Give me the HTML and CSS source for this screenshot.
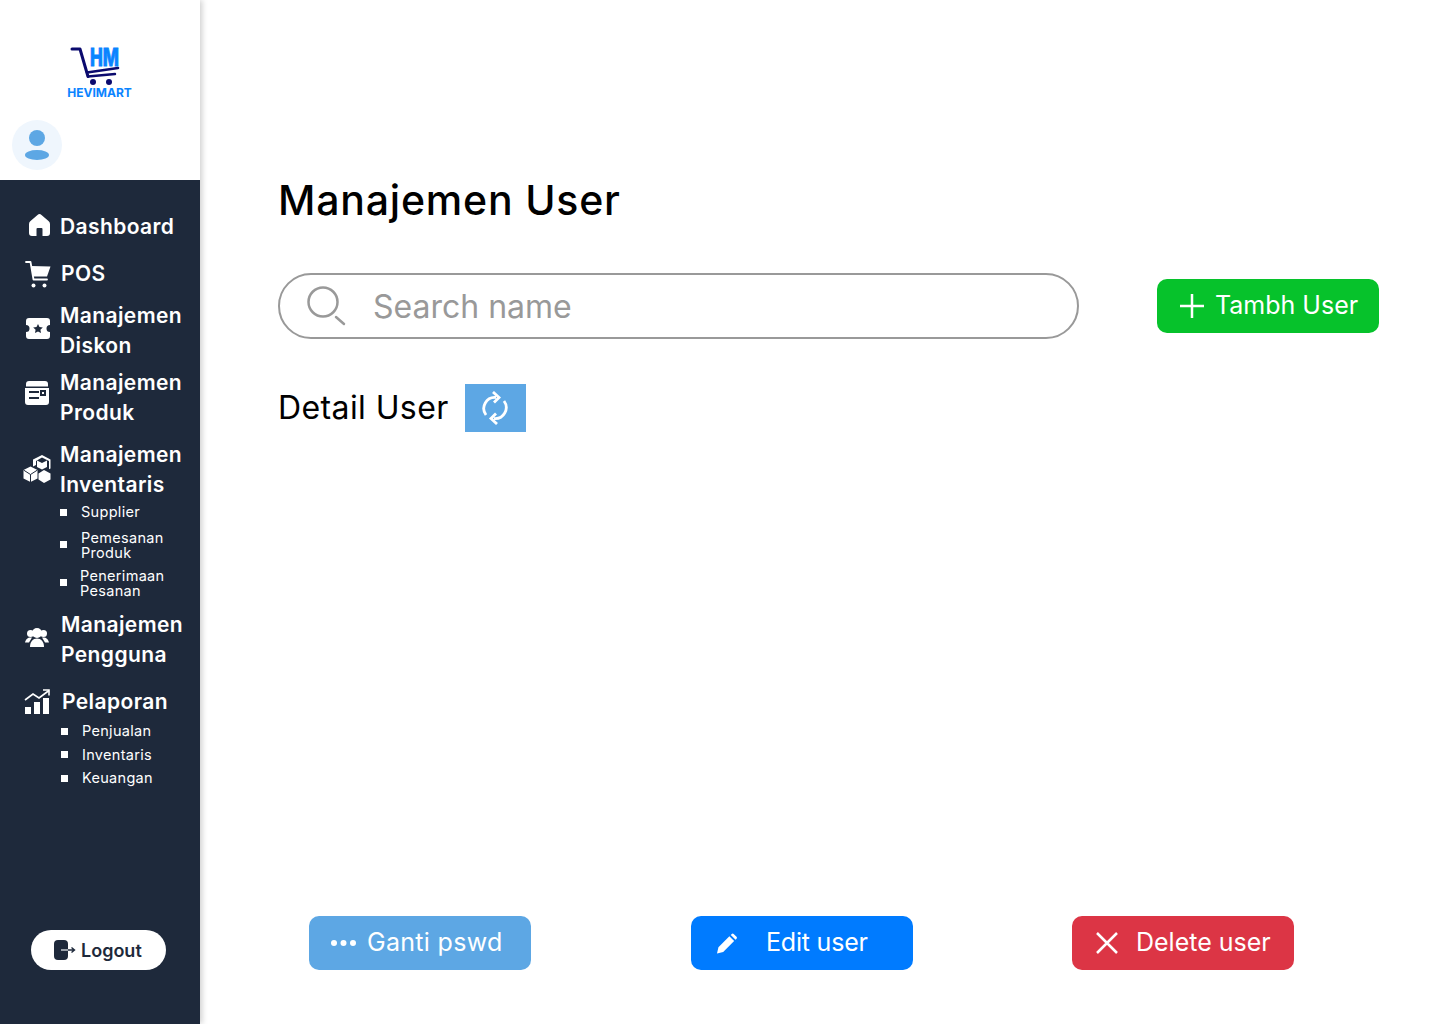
FILE: index.html
```html
<!DOCTYPE html>
<html lang="id">
<head>
    <meta charset="UTF-8">
    <meta name="viewport" content="width=device-width, initial-scale=1.0">
    <title>Manajemen User</title>

    <link rel="stylesheet" href="styles.css">
</head>
<body>

<div class="layout">

    <aside class="sidebar">
        <div class="sidebar-top">
            <div class="logo">
                <svg class="logo-mark" width="70" height="45" viewBox="0 -6 70 45">
                    <text x="20" y="18.500" class="logo-hm" textLength="29" lengthAdjust="spacingAndGlyphs">HM</text>
                    <path d="M2 2h8l8 27.500" fill="none" stroke="#0b0a6e" stroke-width="3" stroke-linecap="round" stroke-linejoin="round"/>
                    <path d="M17 25.500L48 21" fill="none" stroke="#0b0a6e" stroke-width="2.600" stroke-linecap="round"/>
                    <path d="M18 29.500L45 27" fill="none" stroke="#0b0a6e" stroke-width="2.400" stroke-linecap="round"/>
                    <circle cx="23" cy="35" r="3" fill="#0b0a6e"/>
                    <circle cx="39" cy="35" r="3" fill="#0b0a6e"/>
                </svg>
                <span class="logo-name">HEVIMART</span>
            </div>
            <div class="avatar">
                <svg width="26" height="32" viewBox="0 0 26 32">
                    <circle cx="13" cy="9" r="8" fill="#5da7e4"/>
                    <ellipse cx="13" cy="26" rx="12" ry="5" fill="#5da7e4"/>
                </svg>
            </div>
        </div>

        <nav class="menu">
            <a class="menu-item first">
                <span class="menu-icon">
                    <svg width="21" height="22" viewBox="0 0 21 22"><path d="M8.500 1a3 3 0 0 1 4 0l7 6a4 4 0 0 1 1.500 3v9a3 3 0 0 1-3 3h-4.500v-7a1 1 0 0 0-1-1h-4a1 1 0 0 0-1 1v7H3a3 3 0 0 1-3-3v-9a4 4 0 0 1 1.500-3z" fill="#fff"/></svg>
                </span>
                Dashboard
            </a>
            <a class="menu-item pos shift-1">
                <span class="menu-icon">
                    <svg width="26" height="27" viewBox="0 0 26 27"><path d="M1 1h4.500l3 17.500H22" fill="none" stroke="#fff" stroke-width="1.800" stroke-linecap="round" stroke-linejoin="round"/><path d="M6 5l19.500.500-3.500 10H8z" fill="#fff"/><circle cx="8.500" cy="24.500" r="2" fill="#fff"/><circle cx="19.500" cy="24.500" r="2" fill="#fff"/></svg>
                </span>
                POS
            </a>
            <a class="menu-item diskon">
                <span class="menu-icon">
                    <svg width="24" height="21" viewBox="0 0 24 21"><path fill-rule="evenodd" d="M3 0h18a3 3 0 0 1 3 3v4a3.500 3.500 0 0 0 0 7v4a3 3 0 0 1-3 3H3a3 3 0 0 1-3-3v-4a3.500 3.500 0 0 0 0-7V3a3 3 0 0 1 3-3zM12 6l1.500 3 3.300.400-2.400 2.300.600 3.300L12 13.400 9 15l.600-3.300-2.400-2.300 3.300-.400z" fill="#fff"/></svg>
                </span>
                <span>Manajemen<br>Diskon</span>
            </a>
            <a class="menu-item produk">
                <span class="menu-icon">
                    <svg width="24" height="24" viewBox="0 0 24 24"><path d="M4 0h16a3 3 0 0 1 3 3v2.500H1V3a3 3 0 0 1 3-3z" fill="#fff"/><path fill-rule="evenodd" d="M0 7h24v14a3 3 0 0 1-3 3H3a3 3 0 0 1-3-3zM4 10v2h10v-2zM15 9v6h6V9zM17 11h2v2h-2zM4 16v2h10v-2z" fill="#fff"/></svg>
                </span>
                <span>Manajemen<br>Produk</span>
            </a>
            <a class="menu-item inventaris">
                <span class="menu-icon">
                    <svg width="28" height="28" viewBox="0 0 28 28"><path d="M19 0l8.500 4.500v9l-1.500.800V6l-7-3.500L13 6v4l-3 1.500V4.500z" fill="#fff"/><path d="M14 5.500l5 2.500 5-2.500v6.500l-5 2.500-5-2.500z" fill="#fff"/><path d="M7.500 11.500L14.500 15v8.500L7.500 27 .500 23.500V15z" fill="#fff"/><path d="M7.500 19.500L.500 15M7.500 19.500L14.500 15M7.500 19.500V27" fill="none" stroke="#1e293b"/><path d="M21 15l6.500 3.500v6L21 28l-5.500-3.500v-6z" fill="#fff"/></svg>
                </span>
                <span>Manajemen<br>Inventaris</span>
            </a>

            <ul class="submenu submenu-inventaris">
                <li class="sub-single">Supplier</li>
                <li class="sub-double">Pemesanan<br>Produk</li>
                <li class="sub-double sub-penerimaan">Penerimaan<br>Pesanan</li>
            </ul>

            <a class="menu-item pengguna shift-1">
                <span class="menu-icon">
                    <svg width="24" height="21" viewBox="0 0 24 21"><circle cx="12" cy="6" r="5" fill="#fff"/><circle cx="5.500" cy="6.500" r="3.500" fill="#fff"/><circle cx="18.500" cy="6.500" r="3.500" fill="#fff"/><path d="M0 15.500C1 11 4 10 7 10.500L4 15.500zM24 15.500C23 11 20 10 17 10.500L20 15.500z" fill="#fff"/><path d="M5 20c0-5.500 3-8.500 7-8.500s7 3 7 8.500z" fill="#fff"/></svg>
                </span>
                <span>Manajemen<br>Pengguna</span>
            </a>
            <a class="menu-item pelaporan shift-2">
                <span class="menu-icon">
                    <svg width="26" height="25" viewBox="0 0 26 25"><path d="M1 11l8-6 6 4L25 1.500" fill="none" stroke="#fff" stroke-width="1.600"/><path d="M19 1h6v5.500" fill="none" stroke="#fff" stroke-width="1.600"/><rect x="1" y="18" width="6" height="7" fill="#fff"/><rect x="10" y="13" width="6" height="12" fill="#fff"/><rect x="19" y="9" width="6" height="16" fill="#fff"/></svg>
                </span>
                Pelaporan
            </a>

            <ul class="submenu submenu-pelaporan">
                <li>Penjualan</li>
                <li>Inventaris</li>
                <li>Keuangan</li>
            </ul>
        </nav>

        <button class="logout">
            <svg width="22" height="20" viewBox="0 0 22 20"><rect x="0" y="0" width="14" height="20" rx="4" fill="#1e293b"/><path d="M7 10h13M17.500 7.500L20.500 10l-3 2.500" fill="none" stroke="#1e293b" stroke-width="1.400"/><path d="M7 10h7" stroke="#d5d9df" stroke-width="1.400"/></svg>
            Logout
        </button>
    </aside>

    <main class="content">
        <h1>Manajemen User</h1>

        <div class="toolbar">
            <label class="search">
                <svg width="40" height="40" viewBox="0 0 40 40"><circle cx="16" cy="16" r="14.500" fill="none" stroke="#999" stroke-width="2.500"/><path d="M29 31l8 7" stroke="#999" stroke-width="2.500" stroke-linecap="round"/></svg>
                <input type="text" placeholder="Search name">
            </label>
            <button class="btn btn-green">
                <svg width="24" height="24" viewBox="0 0 24 24"><path d="M12 0v24M0 12h24" stroke="#fff" stroke-width="2.500"/></svg>
                <span class="btn-text">Tambh User</span>
            </button>
        </div>

        <div class="detail">
            <h2>Detail User</h2>
            <button class="refresh">
                <svg width="26" height="34" viewBox="0 0 26 34">
                    <path d="M4 24A11 11 0 0 1 14 6.500" fill="none" stroke="#fff" stroke-width="2.800"/>
                    <path d="M11 1l6 5.500-5 5" fill="none" stroke="#fff" stroke-width="2.800"/>
                    <path d="M22 10A11 11 0 0 1 12 27.500" fill="none" stroke="#fff" stroke-width="2.800"/>
                    <path d="M15 33l-6-5.500 5-5" fill="none" stroke="#fff" stroke-width="2.800"/>
                </svg>
            </button>
        </div>

        <div class="actions">
            <button class="btn btn-light">
                <svg width="27" height="8" viewBox="0 0 27 8"><circle cx="4" cy="4" r="3" fill="#fff"/><circle cx="13.500" cy="4" r="3" fill="#fff"/><circle cx="23" cy="4" r="3" fill="#fff"/></svg>
                <span class="btn-text">Ganti pswd</span>
            </button>
            <button class="btn btn-blue">
                <svg width="20" height="21" viewBox="0 0 21 21"><path d="M0 21l1.500-6.500L13 3l5 5L6.500 19.500zM14.500 1.500l1-1a1.500 1.500 0 0 1 2 0l3 3a1.500 1.500 0 0 1 0 2l-1 1z" fill="#fff"/></svg>
                <span class="btn-text">Edit user</span>
            </button>
            <button class="btn btn-red">
                <svg width="22" height="22" viewBox="0 0 22 22"><path d="M1 1l20 20M21 1L1 21" stroke="#fff" stroke-width="2.500"/></svg>
                <span class="btn-text">Delete user</span>
            </button>
        </div>
    </main>

</div>

</body>
</html>
```

FILE: styles.css
```css
* {
    box-sizing: border-box;
}

body {
    margin: 0;
    font-family: Inter, "Liberation Sans", sans-serif;
    background-color: #ffffff;
}

.layout {
    display: flex;
    height: 1024px;
}

/* Sidebar */
.sidebar {
    width: 200px;
    flex-shrink: 0;
    display: flex;
    flex-direction: column;
    background-color: #1e293b;
    box-shadow: 2px 0 6px rgba(0, 0, 0, 0.2);
    color: #ffffff;
}

.sidebar-top {
    height: 180px;
    background-color: #ffffff;
    padding: 41px 0 0 12px;
}

.logo {
    width: 175px;
    display: flex;
    flex-direction: column;
    align-items: center;
}

.logo-mark {
    margin-right: -11px;
}

.logo-hm {
    font-family: Inter, sans-serif;
    font-size: 24px;
    font-weight: 800;
    fill: #0a84ff;
    stroke: #0a84ff;
    stroke-width: 0.8px;
}

.logo-name {
    font-size: 12px;
    font-weight: 700;
    line-height: 14px;
    color: #0a84ff;
}

.avatar {
    width: 50px;
    height: 50px;
    margin-top: 20px;
    border-radius: 50%;
    background-color: #eff6fd;
    display: flex;
    align-items: center;
    justify-content: center;
}

.menu {
    padding-left: 22px;
}

.menu-item {
    display: flex;
    align-items: center;
    font-size: 21px;
    font-weight: 600;
    line-height: 30px;
    letter-spacing: 0.4px;
    color: #ffffff;
}

.menu-icon {
    width: 38px;
    flex-shrink: 0;
    display: flex;
    padding-left: 3px;
}

.first { margin-top: 32px; }
.pos { margin-top: 17px; }
.diskon { margin-top: 12px; }
.produk { margin-top: 7px; }
.inventaris { margin-top: 12px; }
.pengguna { margin-top: 12px; }
.pelaporan { margin-top: 17px; }

.shift-1 { padding-left: 1px; }
.shift-2 { padding-left: 2px; }

.first .menu-icon { padding-left: 7px; margin-bottom: 4px; }
.pos .menu-icon { padding-left: 2px; }
.diskon .menu-icon { padding-left: 4px; margin-bottom: 6px; }
.produk .menu-icon { margin-bottom: 10px; }
.inventaris .menu-icon { padding-left: 1px; margin-bottom: 2px; }
.pengguna .menu-icon { padding-left: 2px; margin-bottom: 6px; }
.pelaporan .menu-icon { padding-left: 0; margin-bottom: 2px; }

.submenu {
    list-style: none;
    margin: 0;
    padding: 0 0 0 38px;
    font-size: 14.500px;
    letter-spacing: 0.3px;
    color: #ffffff;
}

.submenu li {
    position: relative;
    padding-left: 21px;
}

.submenu li::before {
    content: "";
    position: absolute;
    left: 0;
    top: 50%;
    width: 7px;
    height: 7px;
    margin-top: -3px;
    background-color: #ffffff;
}

.sub-single {
    line-height: 24px;
}

.sub-double {
    line-height: 15px;
    margin-top: 6px;
}

.submenu .sub-double::before {
    margin-top: -4px;
}

.submenu .sub-penerimaan {
    padding-left: 20px;
    margin-top: 8px;
}

.submenu-pelaporan {
    padding-left: 39px;
    margin-top: 2px;
}

.submenu-pelaporan li {
    line-height: 23.500px;
}

.logout {
    align-self: flex-start;
    width: 135px;
    height: 40px;
    margin: auto 0 54px 31px;
    border: none;
    border-radius: 20px;
    background-color: #ffffff;
    color: #1e293b;
    font-family: Inter, sans-serif;
    font-size: 18px;
    font-weight: 600;
    display: flex;
    align-items: center;
    gap: 5px;
    padding-left: 23px;
}

/* Content */
.content {
    flex: 1;
    display: flex;
    flex-direction: column;
    padding-left: 78px;
}

h1 {
    margin: 175px 0 0;
    font-size: 41px;
    font-weight: 500;
    line-height: 50px;
    letter-spacing: 0.8px;
    color: #000000;
}

.toolbar {
    display: flex;
    align-items: center;
    gap: 78px;
    margin-top: 48px;
}

.search {
    width: 801px;
    height: 66px;
    border: 2px solid #999999;
    border-radius: 33px;
    display: flex;
    align-items: center;
    padding-left: 27px;
    gap: 24px;
}

.search input {
    flex: 1;
    min-width: 0;
    margin-right: 30px;
    border: none;
    outline: none;
    background: transparent;
    font-family: Inter, sans-serif;
    font-size: 32px;
}

.search input::placeholder {
    color: #999999;
    opacity: 1;
}

.btn {
    width: 222px;
    height: 54px;
    flex-shrink: 0;
    border: none;
    border-radius: 10px;
    display: flex;
    align-items: center;
    font-family: Inter, sans-serif;
    font-size: 25px;
    font-weight: 400;
    color: #ffffff;
}

.btn-text {
    margin-bottom: 2px;
}

.btn-green {
    background-color: #06c22b;
    padding-left: 23px;
    gap: 11px;
}

.btn-light {
    background-color: #5da7e4;
    padding-left: 21px;
    gap: 10px;
    letter-spacing: 0.3px;
}

.btn-blue {
    background-color: #007bff;
    padding-left: 26px;
    gap: 29px;
    letter-spacing: -0.2px;
}

.btn-red {
    background-color: #dc3545;
    padding-left: 24px;
    gap: 18px;
    margin-left: -1px;
}

.detail {
    display: flex;
    align-items: center;
    gap: 16px;
    margin-top: 45px;
}

h2 {
    margin: 0;
    font-size: 32px;
    font-weight: 400;
    line-height: 48px;
    letter-spacing: 0.4px;
    color: #000000;
}

.refresh {
    width: 61px;
    height: 48px;
    border: none;
    padding: 0;
    background-color: #5da7e4;
    display: flex;
    align-items: center;
    justify-content: center;
}

.actions {
    display: flex;
    gap: 160px;
    margin-top: auto;
    margin-bottom: 54px;
    padding-left: 31px;
}
```
